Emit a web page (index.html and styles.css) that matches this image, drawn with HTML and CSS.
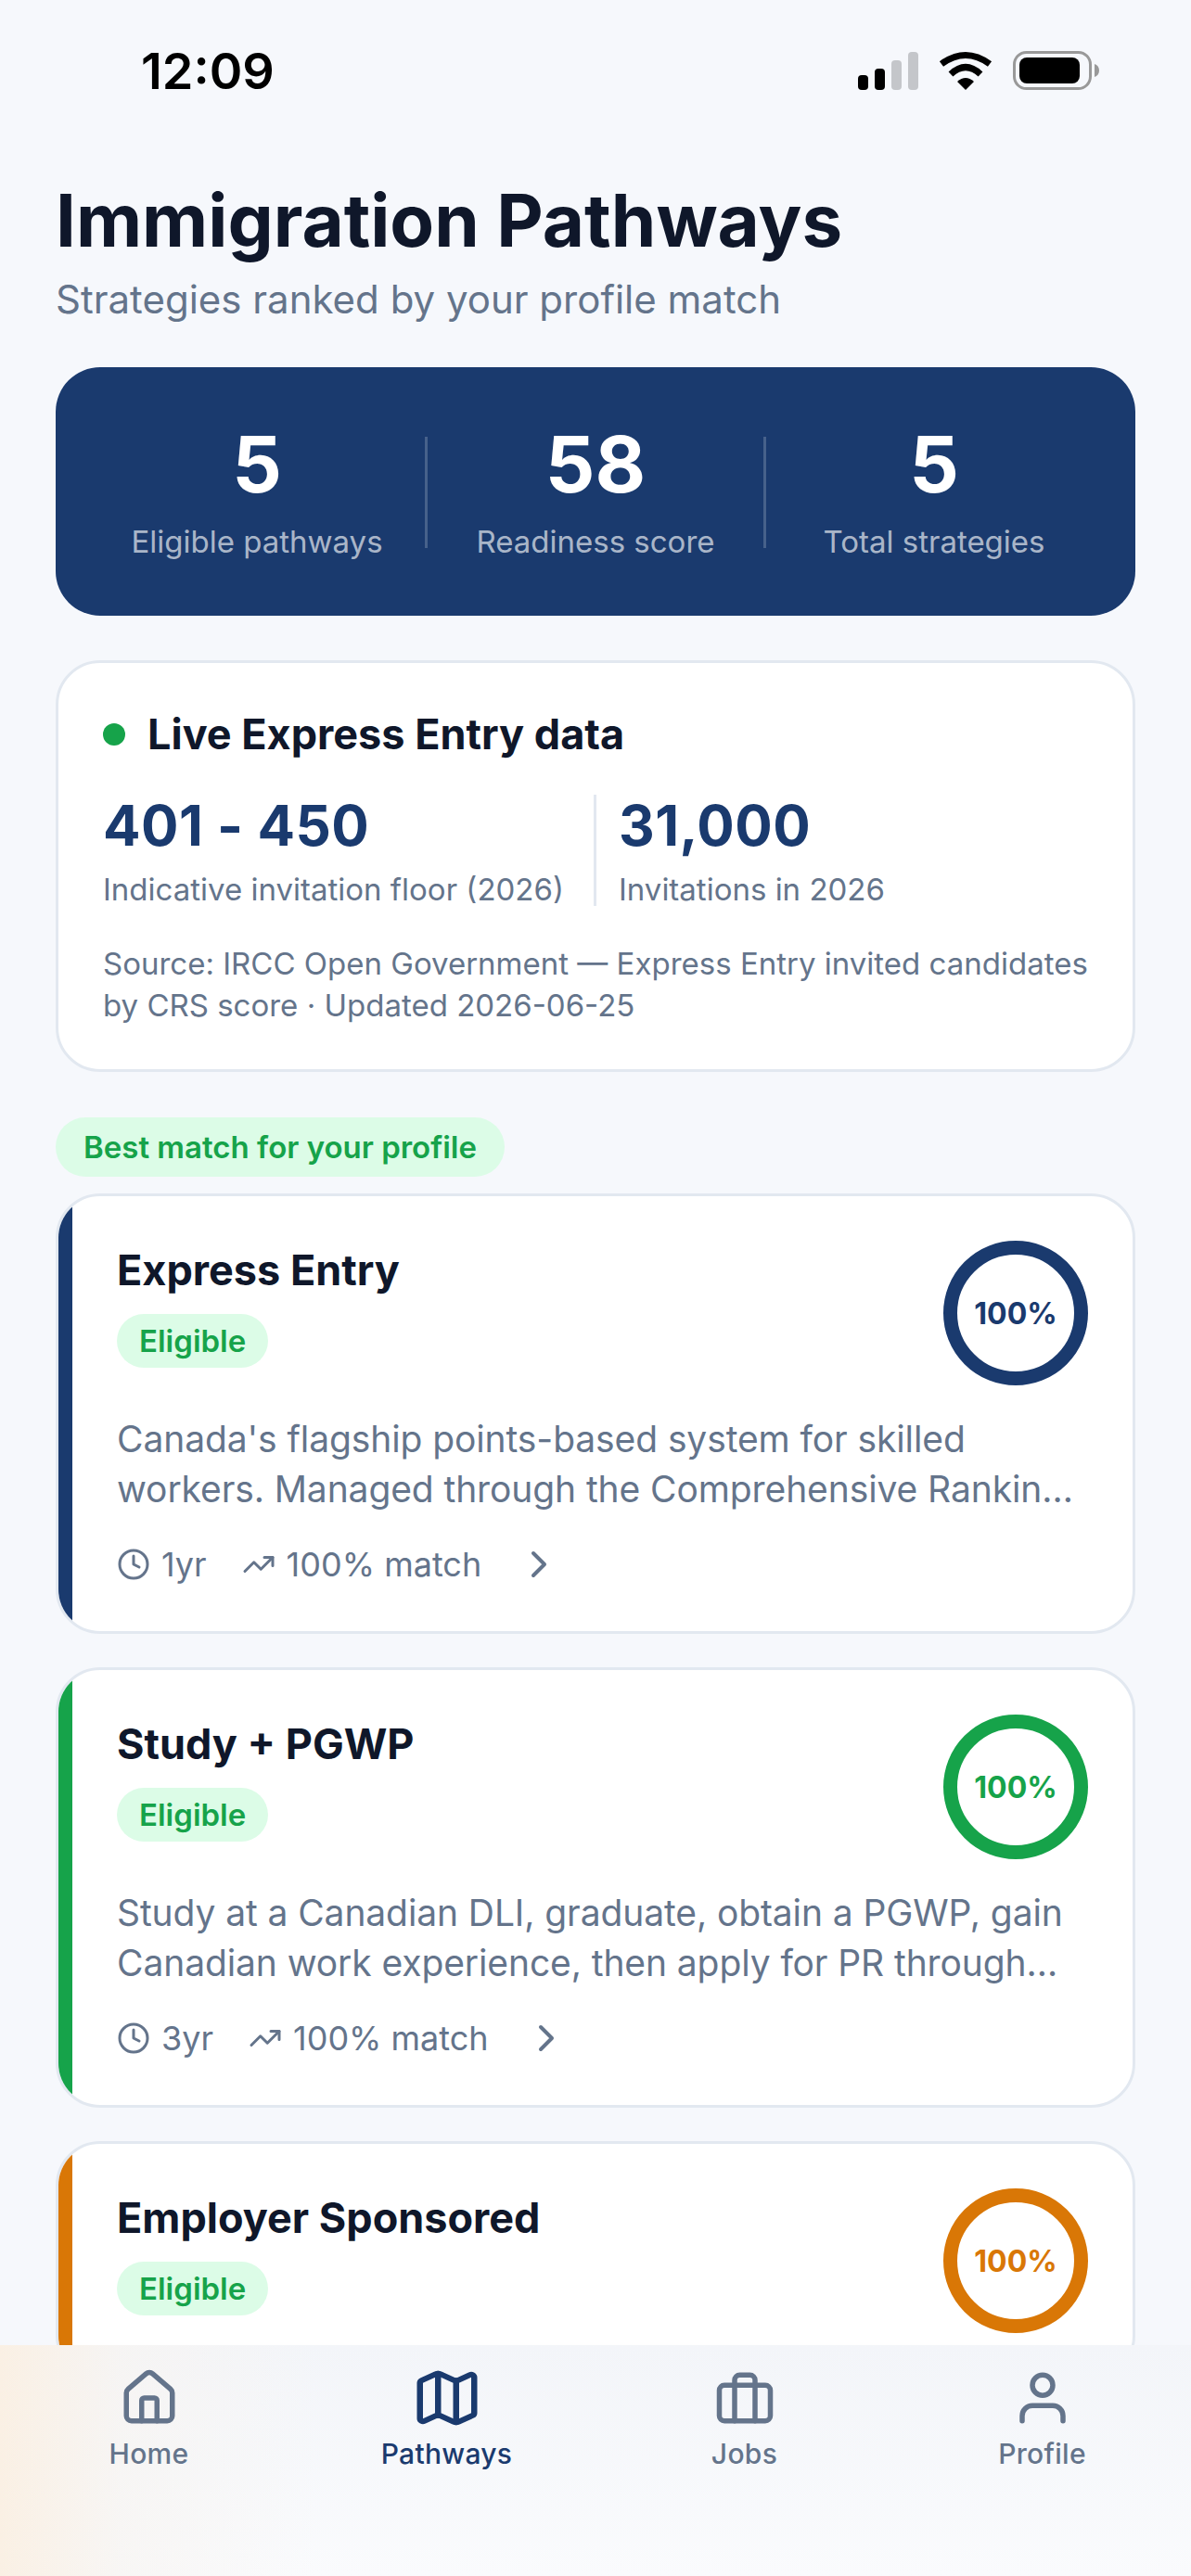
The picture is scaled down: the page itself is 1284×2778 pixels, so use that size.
FILE: index.html
```html
<!DOCTYPE html>
<html lang="en">
<head>
    <meta charset="UTF-8">
    <meta name="viewport" content="width=device-width, initial-scale=1.0">
    <title>Immigration Pathways</title>
    <link rel="stylesheet" href="styles.css">
</head>
<body>
    <div class="screen">
        <div class="status-bar">
            <span class="time">12:09</span>
            <div class="status-icons">
                <svg class="signal" width="65" height="41" viewBox="0 0 65 41">
                    <rect x="0" y="25" width="11" height="16" rx="4" fill="#000"/>
                    <rect x="18" y="18" width="11" height="23" rx="4" fill="#000"/>
                    <rect x="36" y="9" width="11" height="32" rx="4" fill="#c4c6ca"/>
                    <rect x="54" y="0" width="11" height="41" rx="4" fill="#c4c6ca"/>
                </svg>
                <svg class="wifi" width="58" height="42" viewBox="0 0 58 42">
                    <path d="M3 14Q29-5 55 14" fill="none" stroke="#000" stroke-width="7"/>
                    <path d="M13 25Q29 10 45 25" fill="none" stroke="#000" stroke-width="7"/>
                    <path d="M20 33Q29 25 38 33L29 42z" fill="#000"/>
                </svg>
                <svg class="battery" width="94" height="42" viewBox="0 0 94 42">
                    <rect x="1.5" y="1.5" width="82" height="39" rx="13" fill="none" stroke="#999" stroke-width="3"/>
                    <rect x="7" y="7" width="65" height="28" rx="8" fill="#000"/>
                    <path d="M88 14c3 1 5 3.500 5 7s-2 6-5 7z" fill="#999"/>
                </svg>
            </div>
        </div>

        <main class="content">
            <h1 class="page-title">Immigration Pathways</h1>
            <p class="page-sub">Strategies ranked by your profile match</p>

            <section class="stats">
                <div class="stat">
                    <div class="stat-num">5</div>
                    <div class="stat-label">Eligible pathways</div>
                </div>
                <div class="stat-line"></div>
                <div class="stat">
                    <div class="stat-num">58</div>
                    <div class="stat-label">Readiness score</div>
                </div>
                <div class="stat-line"></div>
                <div class="stat">
                    <div class="stat-num">5</div>
                    <div class="stat-label">Total strategies</div>
                </div>
            </section>

            <section class="live">
                <div class="live-head">
                    <span class="live-dot"></span>
                    <h2 class="live-title">Live Express Entry data</h2>
                </div>
                <div class="live-row">
                    <div class="live-col first">
                        <div class="live-num">401 - 450</div>
                        <div class="live-label">Indicative invitation floor (2026)</div>
                    </div>
                    <div class="live-col">
                        <div class="live-num">31,000</div>
                        <div class="live-label">Invitations in 2026</div>
                    </div>
                </div>
                <p class="live-source">Source: IRCC Open Government — Express Entry invited candidates by CRS score · Updated 2026-06-25</p>
            </section>

            <div class="best-tag">Best match for your profile</div>

            <article class="card navy">
                <div class="card-stripe"></div>
                <div class="card-body">
                    <div class="card-head">
                        <div class="card-info">
                            <h3 class="card-title">Express Entry</h3>
                            <span class="pill">Eligible</span>
                        </div>
                        <div class="ring">100%</div>
                    </div>
                    <p class="card-desc">Canada's flagship points-based system for skilled workers. Managed through the Comprehensive Rankin…</p>
                    <div class="card-meta">
                        <span class="meta-item">
                            <svg class="meta-icon" viewBox="0 0 24 24"><circle cx="12" cy="12" r="10"/><path d="M12 6v6l4 2"/></svg>
                            1yr
                        </span>
                        <span class="meta-item">
                            <svg class="meta-icon" viewBox="0 0 24 24"><path d="M16 7h6v6"/><path d="m22 7-8.500 8.500-5-5L2 17"/></svg>
                            100% match
                        </span>
                        <svg class="chevron" viewBox="0 0 24 24"><path d="m9 18 6-6-6-6"/></svg>
                    </div>
                </div>
            </article>

            <article class="card green">
                <div class="card-stripe"></div>
                <div class="card-body">
                    <div class="card-head">
                        <div class="card-info">
                            <h3 class="card-title">Study + PGWP</h3>
                            <span class="pill">Eligible</span>
                        </div>
                        <div class="ring">100%</div>
                    </div>
                    <p class="card-desc">Study at a Canadian DLI, graduate, obtain a PGWP, gain Canadian work experience, then apply for PR through…</p>
                    <div class="card-meta">
                        <span class="meta-item">
                            <svg class="meta-icon" viewBox="0 0 24 24"><circle cx="12" cy="12" r="10"/><path d="M12 6v6l4 2"/></svg>
                            3yr
                        </span>
                        <span class="meta-item">
                            <svg class="meta-icon" viewBox="0 0 24 24"><path d="M16 7h6v6"/><path d="m22 7-8.500 8.500-5-5L2 17"/></svg>
                            100% match
                        </span>
                        <svg class="chevron" viewBox="0 0 24 24"><path d="m9 18 6-6-6-6"/></svg>
                    </div>
                </div>
            </article>

            <article class="card orange">
                <div class="card-stripe"></div>
                <div class="card-body">
                    <div class="card-head">
                        <div class="card-info">
                            <h3 class="card-title">Employer Sponsored</h3>
                            <span class="pill">Eligible</span>
                        </div>
                        <div class="ring">100%</div>
                    </div>
                </div>
            </article>
        </main>

        <!-- sits over the scrolled cards -->
        <nav class="tab-bar">
            <div class="tab">
                <div class="tab-icon">
                    <svg viewBox="0 0 24 24" width="66" height="66"><path d="M15 21v-8a1 1 0 0 0-1-1h-4a1 1 0 0 0-1 1v8"/><path d="M3 10a2 2 0 0 1 .709-1.528l7-5.999a2 2 0 0 1 2.582 0l7 5.999A2 2 0 0 1 21 10v9a2 2 0 0 1-2 2H5a2 2 0 0 1-2-2z"/></svg>
                </div>
                <span class="tab-label">Home</span>
            </div>
            <div class="tab active">
                <div class="tab-icon">
                    <svg viewBox="0 0 24 24" width="78" height="72" preserveAspectRatio="none"><path d="M14.106 5.553a2 2 0 0 0 1.788 0l3.659-1.830A1 1 0 0 1 21 4.619v12.764a1 1 0 0 1-.553.894l-4.553 2.277a2 2 0 0 1-1.788 0l-4.212-2.106a2 2 0 0 0-1.788 0l-3.659 1.830A1 1 0 0 1 3 19.381V6.618a1 1 0 0 1 .553-.894l4.553-2.277a2 2 0 0 1 1.788 0z"/><path d="M15 5.764v15"/><path d="M9 3.236v15"/></svg>
                </div>
                <span class="tab-label">Pathways</span>
            </div>
            <div class="tab">
                <div class="tab-icon">
                    <svg viewBox="0 0 24 24" width="66" height="66"><path d="M16 21V5a2 2 0 0 0-2-2h-4a2 2 0 0 0-2 2v16"/><rect x="2" y="7" width="20" height="14" rx="2"/></svg>
                </div>
                <span class="tab-label">Jobs</span>
            </div>
            <div class="tab">
                <div class="tab-icon">
                    <svg viewBox="0 0 24 24" width="66" height="66"><path d="M20 21v-2a4 4 0 0 0-4-4H8a4 4 0 0 0-4 4v2"/><circle cx="12" cy="7" r="4"/></svg>
                </div>
                <span class="tab-label">Profile</span>
            </div>
        </nav>
    </div>
</body>
</html>
```

FILE: styles.css
```css
body {
    margin: 0;
    font-family: Inter, "Liberation Sans", sans-serif;
    background-color: #f6f8fc;
    color: #0f172a;
}

h1, h2, h3, p {
    margin: 0;
}

.screen {
    position: relative;
    width: 1284px;
    height: 2778px;
    overflow: hidden;
}

/* status bar */
.status-bar {
    display: flex;
    justify-content: space-between;
    align-items: center;
    height: 152px;
    padding: 0 98px 0 152px;
    box-sizing: border-box;
}

.time {
    font-size: 54px;
    font-weight: 600;
    color: #000;
}

.status-icons {
    display: flex;
    align-items: flex-end;
    gap: 22px;
}

/* page content */
.content {
    padding: 39px 60px 0;
}

.page-title {
    font-size: 78px;
    font-weight: 700;
    line-height: 94px;
}

.page-sub {
    margin-top: 8px;
    font-size: 42px;
    line-height: 60px;
    color: #64748b;
}

/* summary card */
.stats {
    display: flex;
    align-items: center;
    margin-top: 43px;
    padding: 57px 36px 56px;
    border-radius: 48px;
    background-color: #1a3a6e;
}

.stat {
    flex: 1;
    text-align: center;
}

.stat-num {
    font-size: 84px;
    font-weight: 700;
    line-height: 96px;
    color: #fff;
}

.stat-label {
    margin-top: 11px;
    font-size: 33px;
    line-height: 48px;
    color: rgba(255, 255, 255, 0.65);
}

.stat-line {
    width: 3px;
    height: 120px;
    background-color: rgba(255, 255, 255, 0.2);
}

/* live data card */
.live {
    margin-top: 48px;
    padding: 48px 48px 46px;
    border: 3px solid #e2e8f0;
    border-radius: 48px;
    background-color: #fff;
}

.live-head {
    display: flex;
    align-items: center;
    gap: 24px;
}

.live-dot {
    width: 24px;
    height: 24px;
    border-radius: 50%;
    background-color: #16a34a;
}

.live-title {
    font-size: 45px;
    font-weight: 700;
    line-height: 57px;
}

.live-row {
    display: flex;
    margin-top: 37px;
}

.live-col {
    padding-left: 24px;
}

.live-col.first {
    padding-left: 0;
    padding-right: 32px;
    border-right: 3px solid #e2e8f0;
}

.live-num {
    font-size: 60px;
    font-weight: 700;
    line-height: 66px;
    letter-spacing: 0.5px;
    color: #1a3a6e;
}

.live-label {
    margin-top: 18px;
    font-size: 33px;
    line-height: 36px;
    color: #64748b;
}

.live-source {
    margin-top: 40px;
    font-size: 33px;
    line-height: 45px;
    color: #64748b;
}

/* pathway list */
.best-tag {
    display: inline-block;
    margin-top: 49px;
    padding: 0 30px;
    border-radius: 32px;
    background-color: #dcfce7;
    font-size: 33px;
    font-weight: 600;
    line-height: 64px;
    color: #16a34a;
}

.card {
    display: flex;
    overflow: hidden;
    margin-top: 36px;
    border: 3px solid #e2e8f0;
    border-radius: 48px;
    background-color: #fff;
}

.best-tag + .card {
    margin-top: 18px;
}

.card-stripe {
    flex: none;
    width: 15px;
}

.card-body {
    flex: 1;
    min-width: 0;
    padding: 48px 48px 48px;
}

.card-head {
    display: flex;
    justify-content: space-between;
}

.card-info {
    padding-top: 2px;
}

.card-title {
    font-size: 45px;
    font-weight: 700;
    line-height: 60px;
}

.pill {
    display: inline-block;
    margin-top: 17px;
    padding: 0 24px;
    border-radius: 29px;
    background-color: #dcfce7;
    font-size: 33px;
    font-weight: 600;
    line-height: 58px;
    color: #16a34a;
}

.ring {
    display: flex;
    align-items: center;
    justify-content: center;
    flex: none;
    width: 156px;
    height: 156px;
    box-sizing: border-box;
    border: 15px solid;
    border-radius: 50%;
    font-size: 32px;
    font-weight: 700;
}

.navy .card-stripe { background-color: #1a3a6e; }
.navy .ring { border-color: #1a3a6e; color: #1a3a6e; }
.green .card-stripe { background-color: #16a34a; }
.green .ring { border-color: #16a34a; color: #16a34a; }
.orange .card-stripe { background-color: #d97706; }
.orange .ring { border-color: #d97706; color: #d97706; }

.card-desc {
    margin-top: 31px;
    font-size: 39px;
    line-height: 54px;
    letter-spacing: -0.1px;
    color: #64748b;
}

.card-meta {
    display: flex;
    align-items: center;
    gap: 38px;
    margin-top: 30px;
    font-size: 36px;
    line-height: 48px;
    color: #64748b;
}

.meta-item {
    display: flex;
    align-items: center;
    gap: 12px;
}

.meta-icon,
.chevron {
    flex: none;
    fill: none;
    stroke: #64748b;
    stroke-width: 2;
    stroke-linecap: round;
    stroke-linejoin: round;
}

.meta-icon {
    width: 36px;
    height: 36px;
}

.chevron {
    width: 48px;
    height: 48px;
}

/* bottom tabs */
.tab-bar {
    position: absolute;
    left: 0;
    right: 0;
    bottom: 0;
    display: flex;
    height: 249px;
    padding-top: 24px;
    box-sizing: border-box;
    background:
        linear-gradient(90deg, #faf0e4 0, rgba(247, 244, 241, 0.7) 130px, rgba(244, 246, 250, 0) 340px),
        linear-gradient(180deg, #f3f5f9 0, #fafbfd 100%);
}

.tab {
    flex: 1;
    display: flex;
    flex-direction: column;
    align-items: center;
    gap: 3px;
    color: #64748b;
}

.tab-icon {
    display: flex;
    align-items: center;
    justify-content: center;
    height: 66px;
}

.tab-icon svg {
    flex: none;
    fill: none;
    stroke: currentColor;
    stroke-width: 2;
    stroke-linecap: round;
    stroke-linejoin: round;
}

.tab-label {
    font-size: 30px;
    font-weight: 500;
    line-height: 48px;
    letter-spacing: 0.3px;
}

.tab.active {
    color: #1a3a6e;
}
```
